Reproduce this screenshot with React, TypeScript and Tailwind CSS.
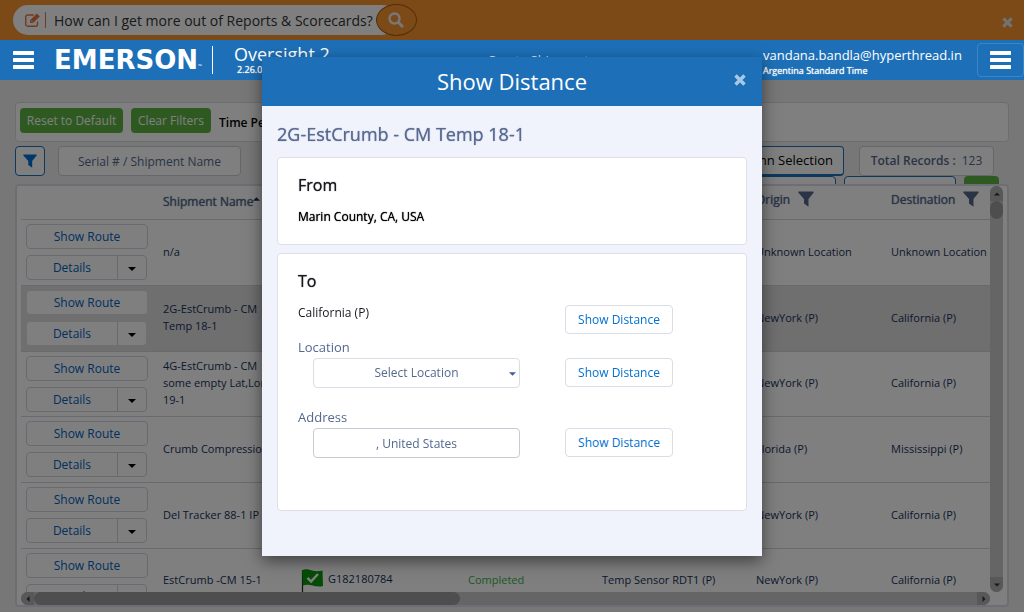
import type { ReactNode } from "react";

type Shipment = {
  name: string;
  serial?: string;
  status?: string;
  sensor?: string;
  origin: string;
  destination: string;
  selected?: boolean;
};

const shipments: Shipment[] = [
  { name: "n/a", origin: "Unknown Location", destination: "Unknown Location" },
  { name: "2G-EstCrumb - CM Temp 18-1", origin: "NewYork (P)", destination: "California (P)", selected: true },
  { name: "4G-EstCrumb - CM some empty Lat,Long 19-1", origin: "NewYork (P)", destination: "California (P)" },
  { name: "Crumb Compression", origin: "Florida (P)", destination: "Mississippi (P)" },
  { name: "Del Tracker 88-1 IP", origin: "NewYork (P)", destination: "California (P)" },
  {
    name: "EstCrumb -CM 15-1",
    serial: "G182180784",
    status: "Completed",
    sensor: "Temp Sensor RDT1 (P)",
    origin: "NewYork (P)",
    destination: "California (P)",
  },
];

function Bars() {
  return (
    <svg viewBox="0 0 21 18" className="h-[18px] w-[21px]" fill="currentColor" aria-hidden="true">
      <rect width="21" height="4" rx="0.5" />
      <rect y="7" width="21" height="4" rx="0.5" />
      <rect y="14" width="21" height="4" rx="0.5" />
    </svg>
  );
}

function Funnel({ className }: { className: string }) {
  return (
    <svg viewBox="0 0 16 16" className={`shrink-0 ${className}`} fill="currentColor" aria-hidden="true">
      <path d="M0.4 0.5h15.2v1.2L10.500 8v7.800L6 12.600V8L0.4 1.7z" />
    </svg>
  );
}

function Cross({ className }: { className: string }) {
  return (
    <svg viewBox="0 0 12 12" className={className} stroke="currentColor" strokeWidth="3.4" aria-hidden="true">
      <path d="M1.5 1.5l9 9M10.5 1.5l-9 9" />
    </svg>
  );
}

function Caret({ className }: { className: string }) {
  return (
    <svg viewBox="0 0 8 4" className={`shrink-0 ${className}`} fill="currentColor" aria-hidden="true">
      <path d="M0 0h8L4 4z" />
    </svg>
  );
}

function DoneFlag() {
  return (
    <svg viewBox="0 0 23 30" className="h-[30px] w-[23px] shrink-0" aria-hidden="true">
      <path d="M1.5 1v29" stroke="#222" strokeWidth="1.2" />
      <path d="M1 1.2C5 -0.5 8 0.8 11 1.6c4 1 7 0.8 10.500 0L22 17c-3.500 1-7 0.600-10.500-0.400C8 15.600 5 15.400 1.800 16.400z" fill="#0a9a0a" />
      <path d="M6.500 8.800l3.600 3.800L17 5" fill="none" stroke="#fff" strokeWidth="2.400" />
    </svg>
  );
}

function PromoBar() {
  return (
    <div className="flex h-10 shrink-0 items-center justify-between bg-[#f7942d] pl-[13px] pr-[11px]">
      <div className="flex items-center">
        <label className="flex h-[30px] w-[384px] items-center rounded-full bg-white pl-3">
          <svg viewBox="0 0 16 14" className="h-[14px] w-4 text-[#e8743b]" fill="none" stroke="currentColor" aria-hidden="true">
            <path d="M12.500 8.500v2.700a2 2 0 0 1-2 2H2.700a2 2 0 0 1-2-2V4a2 2 0 0 1 2-2h6" strokeWidth="1.400" />
            <path d="M5 10V7.200L11.800 0.500l3 3L8 10z" fill="currentColor" stroke="none" />
            <path d="M6.200 7.600l1.400 1.400" stroke="#fff" strokeWidth="0.900" />
          </svg>
          <span className="ml-1 h-4 w-px bg-[#e8743b]" />
          <input
            aria-label="Ask a question"
            defaultValue="How can I get more out of Reports & Scorecards?"
            className="ml-2 w-80 bg-transparent text-[14px] text-[#333] outline-none"
          />
        </label>
        <button
          aria-label="Search"
          className="-ml-[21px] flex h-8 w-[41px] items-center justify-center rounded-[50%] border border-[#a55c12] bg-[#f7942d] pr-[2px] text-[#f0f0f0]"
        >
          <svg viewBox="0 0 16 16" className="h-4 w-4" fill="none" stroke="currentColor" aria-hidden="true">
            <circle cx="6.500" cy="6.500" r="5" strokeWidth="2.400" />
            <path d="M10.300 10.300l4.700 4.700" strokeWidth="2.800" />
          </svg>
        </button>
      </div>
      <button aria-label="Dismiss" className="mt-1 text-[#e4e4e4]">
        <Cross className="h-[11px] w-[11px]" />
      </button>
    </div>
  );
}

function Header() {
  return (
    <header className="relative z-10 flex h-10 shrink-0 items-center bg-[#1d70b8] pl-[13px] text-white">
      <button aria-label="Menu">
        <Bars />
      </button>
      <div className="ml-5 flex w-[148px] items-end">
        <span className="font-['DejaVu_Sans'] text-[26px] leading-6 font-bold">EMERSON</span>
        <span className="text-[5px] leading-3">™</span>
      </div>
      <div className="ml-[10px] h-7 w-px bg-white" />
      <div className="ml-[21px] flex w-[139px] flex-col">
        <span className="text-[18px] leading-5">Oversight 2</span>
        <span className="pl-[3px] text-[9px] leading-3 [text-shadow:0_0_1px_currentColor]">2.26.0</span>
      </div>
      <a href="#create" className="mx-auto pr-[60px] text-[13px] leading-4 text-[#dbe8f4]">
        Create Shipment
      </a>
      <div className="mt-[6px] flex w-[214px] flex-col">
        <span className="text-[13px] leading-4">vandana.bandla@hyperthread.in</span>
        <span className="text-[9px] leading-4 [text-shadow:0_0_1px_currentColor]">Argentina Standard Time</span>
      </div>
      <button
        aria-label="Account menu"
        className="flex h-[34px] w-[47px] items-center justify-center rounded border border-[#3a86c8]"
      >
        <Bars />
      </button>
    </header>
  );
}

function Toolbar() {
  return (
    <>
      <div className="flex h-10 shrink-0 items-start rounded border border-[#d8dbe6] bg-white px-1 py-[5px]">
        <button className="h-[25px] w-[103px] rounded bg-[#5db445] text-[12px] text-white">Reset to Default</button>
        <button className="ml-2 h-[25px] w-20 rounded bg-[#5db445] text-[12px] text-white">Clear Filters</button>
        <span className="mt-[6px] ml-2 text-[12px] leading-[18px] font-semibold text-black">Time Period</span>
      </div>
      <div className="mt-1 flex h-[30px] shrink-0 items-center pr-[15px] text-[13px]">
        <button
          aria-label="Filter"
          className="flex h-[30px] w-[30px] items-center justify-center rounded border border-[#1d70b8] bg-white text-[#0070d2]"
        >
          <Funnel className="h-[14px] w-[14px]" />
        </button>
        <input
          aria-label="Serial number or shipment name"
          placeholder="Serial # / Shipment Name"
          className="ml-[13px] h-[30px] w-[183px] rounded border border-[#cdcfd8] bg-white text-center text-[12px] placeholder:text-[#54698d]"
        />
        <button className="ml-auto h-[30px] w-[150px] rounded border border-b-2 border-[#1d70b8] bg-white pr-[10px] text-right text-black">
          Column Selection
        </button>
        <div className="ml-[15px] flex h-[30px] w-[135px] items-center justify-center gap-[6px] rounded border border-[#cdcfd8] bg-white text-[12px] text-[#54698d]">
          <span className="font-semibold">Total Records :</span>
          <span>123</span>
        </div>
      </div>
      <div className="flex h-2 shrink-0 justify-end gap-2 overflow-hidden pr-[10px]">
        <button aria-label="Saved view" className="h-[30px] w-[120px] rounded border border-[#1d70b8] bg-white" />
        <button aria-label="Export" className="h-[30px] w-28 rounded border border-[#1d70b8] bg-white" />
        <button aria-label="Add" className="h-[30px] w-[35px] rounded bg-[#5db445]" />
      </div>
    </>
  );
}

function RowActions({ selected }: { selected?: boolean }) {
  const edge = selected ? "border-[#dedede]" : "border-[#d2d5e0]";
  return (
    <div className="flex flex-col gap-[6px] pl-[5px] text-[12px] text-[#0061bd]">
      <button className={`h-[25px] w-[122px] rounded border bg-white ${edge}`}>Show Route</button>
      <div className={`flex h-[25px] w-[121px] rounded border bg-white ${edge}`}>
        <button className="flex-1">Details</button>
        <button aria-label="More actions" className="flex w-[29px] items-center justify-center border-l border-[#d2d5e0] text-black">
          <Caret className="mt-[3px] h-1 w-2" />
        </button>
      </div>
    </div>
  );
}

function ShipmentTable() {
  return (
    <div className="flex min-h-0 flex-1 flex-col rounded border-2 border-[#d8dde8] bg-white px-1">
      <div className="flex min-h-0 flex-1">
        <div className="min-w-0 flex-1 overflow-hidden">
          <table className="w-full table-fixed border-collapse text-left text-[11px] leading-[17px] text-[#16325c]">
            <colgroup>
              <col className="w-[134px]" />
              <col className="w-[139px]" />
              <col className="w-[166px]" />
              <col className="w-[134px]" />
              <col className="w-[154px]" />
              <col className="w-[135px]" />
              <col />
            </colgroup>
            <thead>
              <tr className="h-[33px] border-b border-[#d2d5e0] text-[12px] text-[#54698d] [text-shadow:0_0_1px_currentColor]">
                <th />
                <th className="px-2 pb-[2px] font-normal">
                  <span className="flex items-center whitespace-nowrap">
                    Shipment Name
                    <Caret className="mb-1 h-1 w-[7px] rotate-180 text-[#16325c]" />
                  </span>
                </th>
                <th />
                <th />
                <th />
                <th className="px-2 pb-[6px] font-normal">
                  <span className="flex items-center gap-2">
                    Origin <Funnel className="h-4 w-4" />
                  </span>
                </th>
                <th className="px-2 pb-[6px] font-normal">
                  <span className="flex items-center gap-2">
                    Destination <Funnel className="h-4 w-4" />
                  </span>
                </th>
              </tr>
            </thead>
            <tbody>
              {shipments.map((s) => (
                <tr
                  key={s.name}
                  className={`h-[66px] border-b border-[#d2d5e0] nth-[3n]:h-[65px] ${s.selected ? "bg-[#dedede]" : "bg-white"}`}
                >
                  <td>
                    <RowActions selected={s.selected} />
                  </td>
                  <td className="px-2 pb-[2px]">{s.name}</td>
                  <td className="px-[7px]">
                    {s.serial && (
                      <span className="flex items-start gap-1 pt-[6px] leading-5">
                        <DoneFlag />
                        {s.serial}
                      </span>
                    )}
                  </td>
                  <td className="px-2 pb-[2px] text-[#37b34a]">{s.status}</td>
                  <td className="px-2 pb-[2px]">{s.sensor}</td>
                  <td className="px-2 pb-[2px] whitespace-nowrap">{s.origin}</td>
                  <td className="px-2 pb-[2px] whitespace-nowrap">{s.destination}</td>
                </tr>
              ))}
            </tbody>
          </table>
        </div>
        <div className="flex w-[13px] shrink-0 flex-col rounded-lg bg-[#cacaca]">
          <span className="flex h-[15px] items-center justify-center rounded-t-lg bg-[#b0b0b0] text-[#333]">
            <Caret className="h-1 w-[6px] rotate-180" />
          </span>
          <span className="h-[18px] rounded-full bg-[#9c9c9c]" />
          <span className="mt-auto flex h-[15px] items-center justify-center rounded-b-lg bg-[#b0b0b0] text-[#333]">
            <Caret className="h-1 w-[6px]" />
          </span>
        </div>
      </div>
      <div className="mr-[13px] flex h-[13px] shrink-0 rounded-lg bg-[#cacaca]">
        <span className="flex w-[13px] items-center justify-center rounded-l-lg bg-[#b0b0b0] text-[#333]">
          <Caret className="h-1 w-[6px] rotate-90" />
        </span>
        <span className="w-[44%] rounded-full bg-[#9c9c9c]" />
        <span className="ml-auto flex w-[13px] items-center justify-center rounded-r-lg bg-[#b0b0b0] text-[#333]">
          <Caret className="h-1 w-[6px] -rotate-90" />
        </span>
      </div>
    </div>
  );
}

function DistanceButton() {
  return (
    <button className="h-[29px] w-[108px] rounded border border-[#d8dde6] bg-white text-[12px] text-[#0070d2]">
      Show Distance
    </button>
  );
}

function Card({ title, children }: { title: string; children: ReactNode }) {
  return (
    <section className="rounded border border-[#dddfe4] bg-white px-5 pt-[15px]">
      <h3 className="text-[16px] leading-6 text-[#16181d] [text-shadow:0_0_1px_currentColor]">{title}</h3>
      {children}
    </section>
  );
}

function DistanceDialog() {
  return (
    <div className="fixed inset-0 z-20 flex items-start justify-center pt-[57px]">
      <div
        role="dialog"
        aria-labelledby="distance-title"
        className="w-[500px] bg-[#f0f3fb] pb-[45px] shadow-[0_5px_15px_rgba(0,0,0,0.5)]"
      >
        <div className="flex h-[49px] items-center bg-[#1d70b8] px-4 text-white">
          <h1 id="distance-title" className="flex-1 pl-3 text-center text-[22px]">
            Show Distance
          </h1>
          <button aria-label="Close" className="-mt-1 text-[#a8c9e6]">
            <Cross className="h-3 w-3" />
          </button>
        </div>
        <div className="flex flex-col px-[15px]">
          <h2 className="pt-4 pb-[11px] text-[18px] leading-6 text-[#5a6b93] [text-shadow:0_0_1px_currentColor]">
            2G-EstCrumb - CM Temp 18-1
          </h2>
          <Card title="From">
            <p className="mt-[11px] pb-[18px] text-[12px] leading-[18px] text-black [text-shadow:0_0_1px_currentColor]">
              Marin County, CA, USA
            </p>
          </Card>
          <div className="h-2" />
          <Card title="To">
            <div className="mb-1 flex items-start justify-between pt-3 pr-[53px]">
              <p className="text-[12px] leading-4 text-[#16181d]">California (P)</p>
              <DistanceButton />
            </div>
            <label htmlFor="location" className="block text-[13px] leading-[18px] text-[#54698d]">
              Location
            </label>
            <div className="mt-[2px] flex justify-between pr-[53px] pl-[15px]">
              <div className="relative h-[30px] w-[207px]">
                <select
                  id="location"
                  className="h-full w-full appearance-none rounded border border-[#d8dde6] bg-white text-center text-[12px] text-[#54698d]"
                >
                  <option>Select Location</option>
                </select>
                <Caret className="pointer-events-none absolute top-[14px] right-1 h-1 w-[7px] text-[#3f5f95]" />
              </div>
              <DistanceButton />
            </div>
            <label htmlFor="address" className="mt-5 block text-[13px] leading-[18px] text-[#54698d]">
              Address
            </label>
            <div className="mt-[2px] mb-[52px] flex justify-between pr-[53px] pl-[15px]">
              <input
                id="address"
                defaultValue=", United States"
                className="h-[30px] w-[207px] rounded border border-[#c8cbd4] bg-white text-center text-[12px] text-[#54698d]"
              />
              <DistanceButton />
            </div>
          </Card>
        </div>
      </div>
    </div>
  );
}

export default function App() {
  return (
    <div className="flex h-screen flex-col overflow-hidden bg-[#efeff1] font-['Open_Sans','Noto_Sans',sans-serif]">
      <PromoBar />
      <Header />
      <main className="flex min-h-0 flex-1 flex-col px-[15px] pt-[22px] pb-[5px]">
        <Toolbar />
        <ShipmentTable />
      </main>
      <div className="fixed inset-0 z-[5] bg-black/50" />
      <DistanceDialog />
    </div>
  );
}
